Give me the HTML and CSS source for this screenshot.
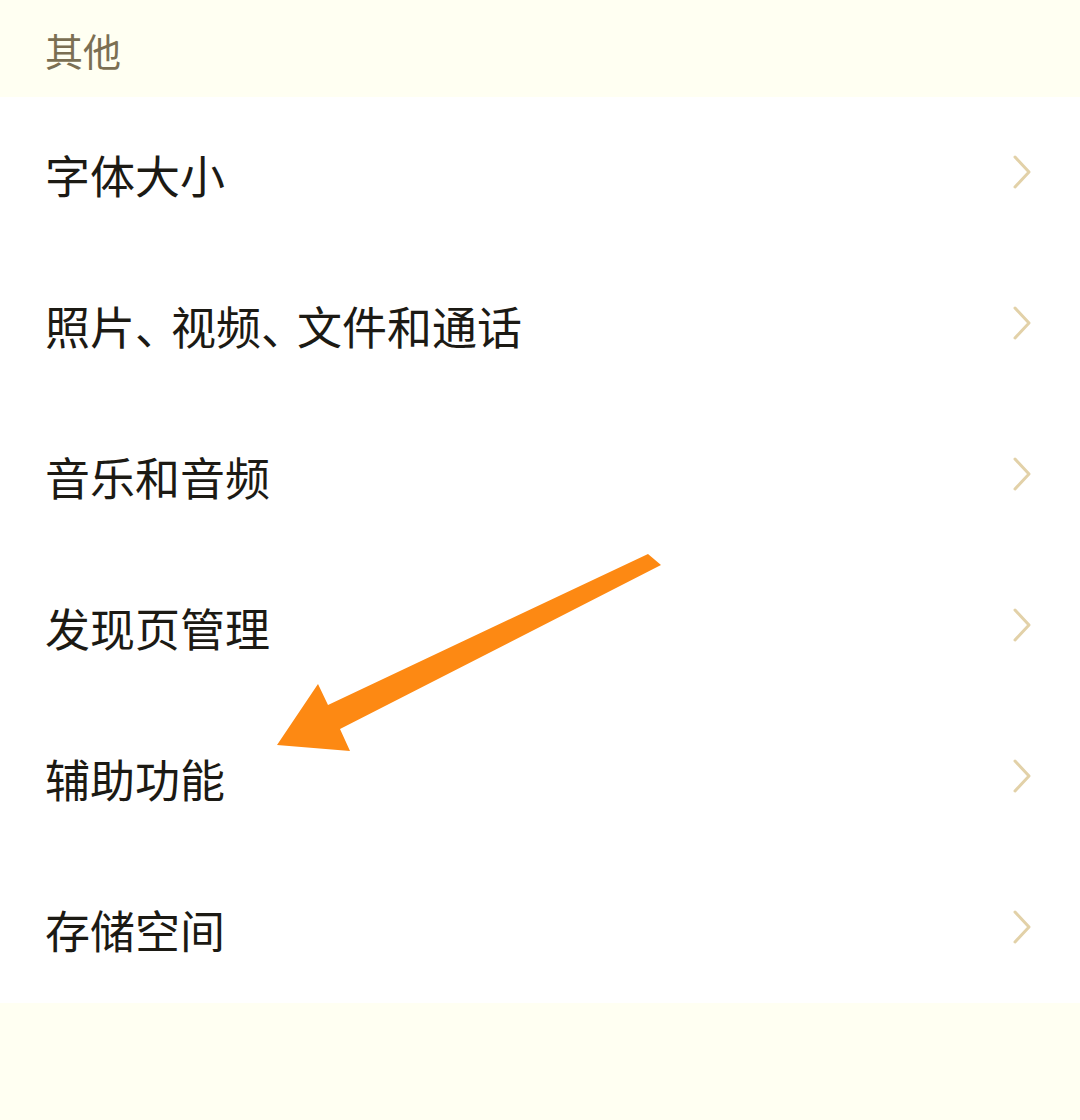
FILE: index.html
```html
<!DOCTYPE html>
<html lang="zh-CN">
<head>
    <meta charset="UTF-8">
    <meta name="viewport" content="width=device-width, initial-scale=1.0">
    <title>设置</title>
    <link rel="stylesheet" href="styles.css">
</head>
<body>

    <div class="settings">
        <div class="settings__header">其他</div>

        <ul class="settings__list">
            <li class="settings__item">
                <span class="settings__label">字体大小</span>
                <svg class="settings__chevron" viewBox="0 0 20 36"><path d="M3 3 L17 18 L3 33"/></svg>
            </li>
            <li class="settings__item">
                <span class="settings__label">照片<span class="settings__comma">、</span>视频<span class="settings__comma">、</span>文件和通话</span>
                <svg class="settings__chevron" viewBox="0 0 20 36"><path d="M3 3 L17 18 L3 33"/></svg>
            </li>
            <li class="settings__item">
                <span class="settings__label">音乐和音频</span>
                <svg class="settings__chevron" viewBox="0 0 20 36"><path d="M3 3 L17 18 L3 33"/></svg>
            </li>
            <li class="settings__item">
                <span class="settings__label">发现页管理</span>
                <svg class="settings__chevron" viewBox="0 0 20 36"><path d="M3 3 L17 18 L3 33"/></svg>
            </li>
            <li class="settings__item">
                <span class="settings__label">辅助功能</span>
                <svg class="settings__chevron" viewBox="0 0 20 36"><path d="M3 3 L17 18 L3 33"/></svg>
            </li>
            <li class="settings__item">
                <span class="settings__label">存储空间</span>
                <svg class="settings__chevron" viewBox="0 0 20 36"><path d="M3 3 L17 18 L3 33"/></svg>
            </li>
        </ul>

        <!-- annotation arrow drawn over the list -->
        <svg class="settings__arrow" width="1080" height="1120" viewBox="0 0 1080 1120">
            <polygon points="648,554 661,565 340,729 350,751 277,745 318,684 328,705"/>
        </svg>
    </div>

</body>
</html>
```

FILE: styles.css
```css
body {
    margin: 0;
    background: #fffff2;
    font-family: "Noto Sans CJK SC", "Noto Sans", sans-serif;
}

.settings {
    position: relative; /* a seta fica por cima da lista */
    width: 1080px;
    height: 1120px;
}

.settings__header {
    height: 97px;
    box-sizing: border-box;
    padding: 26px 0 0 45px;
    font-size: 38px;
    line-height: 48px;
    color: #7b6f53;
}

.settings__list {
    list-style: none;
    margin: 0;
    padding: 0;
    background: #ffffff;
}

.settings__item {
    display: flex;
    justify-content: space-between;
    align-items: center;
    height: 151px;
    box-sizing: border-box;
    padding: 4px 48px 0 45px;
}

.settings__label {
    font-size: 45px;
    line-height: 60px;
    color: #1c1a14;
}

/* pontuação um pouco mais estreita, como no aparelho */
.settings__comma {
    letter-spacing: -9px;
}

.settings__chevron {
    width: 20px;
    height: 36px;
    margin-top: -6px;
    fill: none;
    stroke: #e2d1a8;
    stroke-width: 3;
    stroke-linecap: round;
    stroke-linejoin: round;
}

.settings__arrow {
    position: absolute;
    top: 0;
    left: 0;
    pointer-events: none;
}

.settings__arrow polygon {
    fill: #fd8913;
}
```
